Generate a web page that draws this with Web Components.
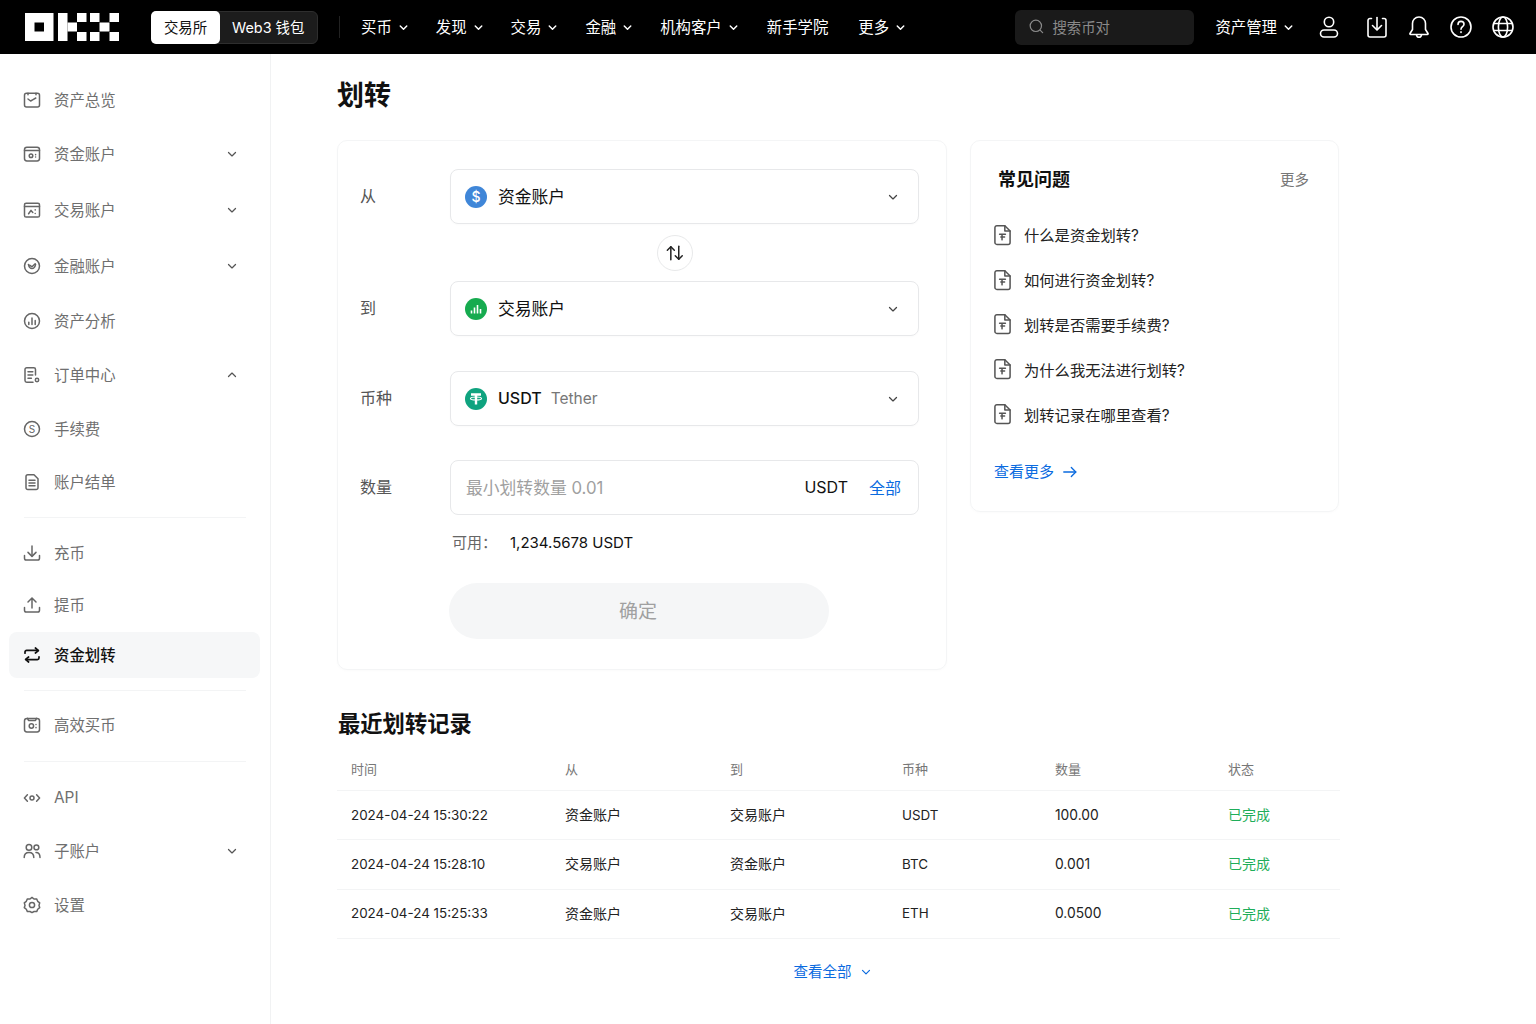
<!DOCTYPE html>
<html lang="zh-CN">
<head>
<meta charset="UTF-8">
<title>划转</title>
<style>
  html, body { margin: 0; height: 100%; background: #fff; }
  body { font-family: Inter, "Noto Sans CJK SC", sans-serif; color: #111; overflow: hidden; }
</style>
</head>
<body>
<app-shell></app-shell>

<script>
  const ICONS = {
    chevDown: '<polyline points="4.5,7 9,11.5 13.5,7"/>',
    chevUp: '<polyline points="4.5,11 9,6.5 13.5,11"/>',
    overview: '<rect x="1.5" y="2.2" width="15" height="13.8" rx="2"/><path d="M5 2.2v1.6M13 2.2v1.6"/><polyline points="5,8 7.6,10 9.6,8.800 12.800,7"/>',
    funding: '<rect x="1.5" y="2.2" width="15" height="13.8" rx="2.4"/><path d="M1.5 5.400h15"/><circle cx="8" cy="10.800" r="1.800"/><path d="M12.600 9.600v.1M12.600 12v.1"/>',
    trading: '<rect x="1.5" y="2.2" width="15" height="13.8" rx="1.6"/><path d="M1.5 5.600h15"/><polyline points="5.600,12.800 8,9.400 9.800,11.400"/><path d="M12.200 8.800v.1M12.200 12.400v.1"/>',
    earn: '<circle cx="9" cy="9" r="7.5"/><path d="M5.400 7.400c.6 2.800 2 4.200 3.600 4.200s3-1.400 3.600-4.200"/><polyline points="6.600,8.200 9,9.800 12.200,6.800"/>',
    analysis: '<circle cx="9" cy="9" r="7.5"/><path d="M5.800 10.200v2.200M9 6v6.400M12.200 8.600v3.800"/>',
    orders: '<path d="M12.500 9V3.500a1.700 1.700 0 0 0-1.700-1.700H3.700A1.700 1.700 0 0 0 2 3.500v11a1.700 1.700 0 0 0 1.700 1.700h6.300"/><path d="M5 5.800h4.800M5 9h4.800M5 12.200h3.400"/><circle cx="14" cy="14" r="1.700"/>',
    fee: '<circle cx="9" cy="9" r="7.5"/><text x="9" y="12.600" font-size="10" text-anchor="middle" fill="currentColor" stroke="none">S</text>',
    statement: '<path d="M3 3.600a1.800 1.800 0 0 1 1.800-1.800h6.200l4 4v9a1.800 1.800 0 0 1-1.800 1.800H4.800A1.800 1.800 0 0 1 3 14.800z"/><path d="M6 7.200h6M6 10h6M6 12.800h6"/>',
    deposit: '<path d="M1.500 11.500v2.700a1.800 1.800 0 0 0 1.800 1.800h11.400a1.800 1.800 0 0 0 1.800-1.800v-2.700"/><path d="M9 2v10"/><polyline points="5,8.400 9,12.400 13,8.400"/>',
    withdraw: '<path d="M1.500 11.500v2.700a1.800 1.800 0 0 0 1.800 1.800h11.400a1.800 1.800 0 0 0 1.800-1.800v-2.700"/><path d="M9 12V2.400"/><polyline points="5,6 9,2 13,6"/>',
    transfer: '<path d="M2 7.200V6a1.600 1.600 0 0 1 1.600-1.600H15"/><polyline points="12.400,2 15.400,4.600 12.400,7"/><path d="M16 10.800V12a1.600 1.600 0 0 1-1.600 1.600H3"/><polyline points="5.600,11 2.600,13.400 5.600,16"/>',
    fastbuy: '<rect x="1.500" y="2.400" width="15" height="13.600" rx="2.400"/><path d="M4.500 2.400l1 2h7l1-2"/><circle cx="8.400" cy="10" r="2.200"/><path d="M13 8.400v.1M13 11.600v.1"/>',
    api: '<polyline points="4.400,5.800 1.400,9 4.400,12.200"/><polyline points="13.600,5.800 16.600,9 13.600,12.200"/><circle cx="9" cy="9" r="2"/>',
    sub: '<circle cx="6" cy="5.400" r="2.800"/><circle cx="13.400" cy="5.400" r="2.400"/><path d="M1.200 15.600c0-3.400 2-5.200 4.800-5.200s4.800 1.800 4.800 5.200"/><path d="M13 10.400c2.400 0 4 1.800 4 5.200"/>',
    settings: '<path d="M9 1.400l2 1.600 2.600-.1 1.100 2.400 2 1.600-.7 2.500.7 2.200-2 1.700-1 2.300-2.600-.1L9 16.600l-2-1.100-2.600.1-1.100-2.300-2-1.700.7-2.200-.7-2.500 2-1.600L4.400 2.900 7 3z"/><circle cx="9" cy="9" r="2.600"/>',
    search: '<circle cx="8.300" cy="8.300" r="6"/><path d="M12.800 12.800l2.700 2.700"/>',
    user: '<circle cx="12" cy="7" r="4.700"/><rect x="3.500" y="15" width="17" height="7" rx="3.500"/>',
    download: '<path d="M6.500 3.500H5a2 2 0 0 0-2 2V20a2 2 0 0 0 2 2h14a2 2 0 0 0 2-2V5.500a2 2 0 0 0-2-2h-1.500"/><path d="M12 2.500v12"/><polyline points="7.500,10.500 12,15 16.500,10.500"/>',
    bell: '<path d="M12 2c-4 0-6.500 3-6.500 6.500v6L3 18.500c-.3.5 0 1 .6 1h16.800c.6 0 .9-.5.6-1l-2.500-4v-6C18.500 5 16 2 12 2z"/><path d="M9.500 19.800c.2 1.500 1.200 2.400 2.500 2.400s2.300-.9 2.500-2.400"/>',
    help: '<circle cx="12" cy="12" r="10"/><path d="M9 9.400c0-1.800 1.300-3 3-3s3 1.100 3 2.800c0 2.400-3 2.600-3 5"/><path d="M12 16.900v.6"/>',
    globe: '<circle cx="12" cy="12" r="10"/><ellipse cx="12" cy="12" rx="4.600" ry="10"/><path d="M3 8.500h18M3 15.500h18"/>',
    swap: '<path d="M7 20V4.500"/><polyline points="2.800,8.700 7,4.500 11.200,8.700"/><path d="M16.500 4v15.500"/><polyline points="12.300,15.300 16.500,19.500 20.700,15.300"/>',
    doc: '<path d="M2.500 3.200A1.700 1.700 0 0 1 4.200 1.500h6.800l4.500 4.500v9.800a1.700 1.700 0 0 1-1.700 1.700H4.200a1.700 1.700 0 0 1-1.700-1.700z"/><path d="M11 1.500V6h4.500"/><path d="M6.500 8.800h5M7.600 11.200h3.200M8.600 8.800v4.800"/>',
    arrow: '<path d="M2 9h13.500"/><polyline points="10.500,4 15.500,9 10.500,14"/>'
  };

  const VIEWBOX = { user: 24, download: 24, bell: 24, help: 24, globe: 24, swap: 24 };

  class UiIcon extends HTMLElement {
    connectedCallback() {
      const name = this.getAttribute('name');
      const size = this.getAttribute('size') || 18;
      const weight = this.getAttribute('weight') || 1.3;
      const vb = VIEWBOX[name] || 18;
      this.attachShadow({ mode: 'open' }).innerHTML = `
        <style>:host { display: inline-flex; flex: none; } svg { display: block; overflow: visible; }</style>
        <svg width="${size}" height="${size}" viewBox="0 0 ${vb} ${vb}" fill="none" stroke="currentColor"
             stroke-width="${weight}" stroke-linecap="round" stroke-linejoin="round">${ICONS[name]}</svg>`;
    }
  }
  customElements.define('ui-icon', UiIcon);

  class OkxLogo extends HTMLElement {
    connectedCallback() {
      this.attachShadow({ mode: 'open' }).innerHTML = `
        <style>:host { display: block; flex: none; line-height: 0; }</style>
        <svg width="94" height="28" viewBox="0 0 94 28" fill="#fff">
          <path fill-rule="evenodd" d="M0 0h28.500v28H0zM9.500 9.500v9h9.500v-9z"/>
          <rect x="33" y="0" width="9.500" height="28"/>
          <rect x="42.500" y="9.500" width="9.500" height="9"/>
          <rect x="52" y="0" width="9.500" height="9"/>
          <rect x="52" y="19" width="9.500" height="9"/>
          <rect x="65" y="0" width="9.500" height="9"/>
          <rect x="84.500" y="0" width="9.500" height="9"/>
          <rect x="74.500" y="9.500" width="10" height="9"/>
          <rect x="65" y="19" width="9.500" height="9"/>
          <rect x="84.500" y="19" width="9.500" height="9"/>
        </svg>`;
    }
  }
  customElements.define('okx-logo', OkxLogo);

  class NavLink extends HTMLElement {
    connectedCallback() {
      const chev = this.hasAttribute('menu') ? '<ui-icon name="chevDown" size="13" weight="2"></ui-icon>' : '';
      this.attachShadow({ mode: 'open' }).innerHTML = `
        <style>
          :host { display: inline-flex; align-items: center; gap: 5px; font-size: 15.4px; color: #fff; white-space: nowrap; flex: none; }
          span { padding-bottom: 2px; }
        </style>
        <span><slot></slot></span>${chev}`;
    }
  }
  customElements.define('nav-link', NavLink);

  class TopBar extends HTMLElement {
    connectedCallback() {
      this.attachShadow({ mode: 'open' }).innerHTML = `
        <style>
          :host { display: flex; align-items: center; height: 54px; background: #000; color: #fff; padding: 0 21px 0 25px; box-sizing: border-box; }
          .seg { display: flex; width: 167px; height: 33px; margin-left: 32px; background: #1c1c1c; border: 1px solid #2e2e2e; border-radius: 6px; box-sizing: border-box; font-size: 14.4px; flex: none; }
          .seg span { display: flex; align-items: center; justify-content: center; padding-bottom: 1px; box-sizing: border-box; }
          .seg .on { width: 69px; background: #fff; color: #111; border-radius: 5px; margin: -1px 0 -1px -1px; }
          .seg .off { padding-left: 12px; }
          .rule { width: 1px; height: 22px; background: #222; margin: 0 21px; flex: none; }
          .nav { display: flex; gap: 26px; }
          .nav .wide { margin-left: 1px; }
          .nav .last { margin-left: 4px; }
          .right { margin-left: auto; display: flex; align-items: center; }
          .search { width: 179px; height: 35px; background: #1a1a1a; border-radius: 6px; display: flex; align-items: center; gap: 7px; padding: 0 0 1px 13px; box-sizing: border-box; font-size: 14.4px; color: #8a8a8a; }
          .assets { margin: 0 22px 0 21px; }
          .icons { display: flex; gap: 18px; }
          .icons ui-icon:first-child { margin-right: 6px; }
        </style>
        <okx-logo></okx-logo>
        <div class="seg"><span class="on">交易所</span><span class="off">Web3 钱包</span></div>
        <div class="rule"></div>
        <div class="nav">
          <nav-link menu>买币</nav-link>
          <nav-link menu>发现</nav-link>
          <nav-link menu>交易</nav-link>
          <nav-link menu>金融</nav-link>
          <nav-link menu>机构客户</nav-link>
          <nav-link class="wide">新手学院</nav-link>
          <nav-link class="last" menu>更多</nav-link>
        </div>
        <div class="right">
          <div class="search"><ui-icon name="search" size="17"></ui-icon>搜索币对</div>
          <nav-link class="assets" menu>资产管理</nav-link>
          <div class="icons">
            <ui-icon name="user" size="24" weight="1.600"></ui-icon>
            <ui-icon name="download" size="24" weight="1.600"></ui-icon>
            <ui-icon name="bell" size="24" weight="1.600"></ui-icon>
            <ui-icon name="help" size="24" weight="1.600"></ui-icon>
            <ui-icon name="globe" size="24" weight="1.600"></ui-icon>
          </div>
        </div>`;
    }
  }
  customElements.define('top-bar', TopBar);

  class SideItem extends HTMLElement {
    connectedCallback() {
      const icon = this.getAttribute('icon');
      const arrow = this.getAttribute('arrow');
      const active = this.hasAttribute('active');
      this.attachShadow({ mode: 'open' }).innerHTML = `
        <style>
          :host { display: flex; align-items: center; height: ${this.getAttribute('h') || 54}px; margin: 0 10px 0 9px; padding: 0 21px 0 14px;
                  box-sizing: border-box; font-size: 15.4px; color: ${active ? '#111' : '#6f6f6f'}; border-radius: 8px;
                  ${active ? 'background: #f6f7f8; font-weight: 500;' : ''} }
          .label { margin-left: 13px; flex: 1; padding-bottom: 2px; }
          .icon { color: ${active ? '#111' : '#666'}; display: flex; }
          .chev { color: #555; display: flex; }
        </style>
        <span class="icon"><ui-icon name="${icon}" size="18" weight="${active ? 1.700 : 1.500}"></ui-icon></span>
        <span class="label"><slot></slot></span>
        ${arrow ? `<span class="chev"><ui-icon name="${arrow}" size="14" weight="1.600"></ui-icon></span>` : ''}`;
    }
  }
  customElements.define('side-item', SideItem);

  class SideNav extends HTMLElement {
    connectedCallback() {
      this.attachShadow({ mode: 'open' }).innerHTML = `
        <style>
          :host { display: block; width: 271px; flex: none; border-right: 1px solid #f1f2f3; box-sizing: border-box; padding-top: 19px; }
          hr { border: 0; height: 1px; background: #f3f4f5; margin: 10px 24px; }
          hr.b { margin: 12px 24px 10px; }
        </style>
        <side-item icon="overview" h="54">资产总览</side-item>
        <side-item icon="funding" h="54" arrow="chevDown">资金账户</side-item>
        <side-item icon="trading" h="58" arrow="chevDown">交易账户</side-item>
        <side-item icon="earn" h="54" arrow="chevDown">金融账户</side-item>
        <side-item icon="analysis" h="56">资产分析</side-item>
        <side-item icon="orders" h="52" arrow="chevUp">订单中心</side-item>
        <side-item icon="fee" h="56">手续费</side-item>
        <side-item icon="statement" h="50">账户结单</side-item>
        <hr>
        <side-item icon="deposit" h="50">充币</side-item>
        <side-item icon="withdraw" h="54">提币</side-item>
        <side-item icon="transfer" h="46" active>资金划转</side-item>
        <hr class="b">
        <side-item icon="fastbuy" h="48">高效买币</side-item>
        <hr class="b">
        <side-item icon="api" h="52">API</side-item>
        <side-item icon="sub" h="54" arrow="chevDown">子账户</side-item>
        <side-item icon="settings" h="54">设置</side-item>`;
    }
  }
  customElements.define('side-nav', SideNav);

  class CoinBadge extends HTMLElement {
    connectedCallback() {
      const kind = this.getAttribute('kind');
      const bg = { funding: '#3f86d8', trading: '#16ab4f', usdt: '#0fa37f' }[kind];
      const inner = {
        funding: '<text x="11" y="15.800" font-size="14" font-weight="500" text-anchor="middle" fill="#fff">$</text>',
        trading: '<path d="M6.500 12.500v3M9.500 9.500v6M12.500 7v8.500M15.500 11v4.500" stroke="#fff" stroke-width="1.600" fill="none"/>',
        usdt: '<path d="M6 6.500h10M11 6.500v10" stroke="#fff" stroke-width="2.400" fill="none"/><ellipse cx="11" cy="10.500" rx="5.500" ry="1.500" stroke="#fff" stroke-width="1.200" fill="none"/>'
      }[kind];
      this.attachShadow({ mode: 'open' }).innerHTML = `
        <style>:host { display: block; flex: none; line-height: 0; }</style>
        <svg width="22" height="22" viewBox="0 0 22 22"><circle cx="11" cy="11" r="11" fill="${bg}"/>${inner}</svg>`;
    }
  }
  customElements.define('coin-badge', CoinBadge);

  class FieldRow extends HTMLElement {
    connectedCallback() {
      const kind = this.getAttribute('kind');
      this.attachShadow({ mode: 'open' }).innerHTML = `
        <style>
          :host { display: flex; align-items: center; font-size: 16.800px; }
          .label { width: 90px; font-size: 16px; color: #555; flex: none; padding-bottom: 3px; }
          .box { width: 469px; height: 55px; box-sizing: border-box; border: 1px solid #e7e8ea; border-radius: 8px; display: flex; align-items: center; gap: 11px; padding: 0 18px 0 14px; color: #111; box-shadow: 0 1px 2px rgba(0,0,0,.02); }
          .value { flex: 1; display: flex; align-items: baseline; gap: 9px; padding-bottom: 2px; }
          .chev { color: #444; display: flex; }
        </style>
        <span class="label">${this.getAttribute('label')}</span>
        <div class="box">
          <coin-badge kind="${kind}"></coin-badge>
          <span class="value"><slot></slot></span>
          <span class="chev"><ui-icon name="chevDown" size="14" weight="1.600"></ui-icon></span>
        </div>`;
    }
  }
  customElements.define('field-row', FieldRow);

  class TransferForm extends HTMLElement {
    connectedCallback() {
      this.attachShadow({ mode: 'open' }).innerHTML = `
        <style>
          :host { display: block; width: 610px; height: 530px; box-sizing: border-box; border: 1px solid #f4f5f6; border-radius: 10px; padding: 28px 0 0 22px; flex: none; box-shadow: 0 1px 3px rgba(0,0,0,.02); }
          .swap { width: 36px; height: 36px; margin: 11px 0 10px 297px; border: 1px solid #e8e9ea; border-radius: 50%; display: flex; align-items: center; justify-content: center; box-sizing: border-box; color: #222; }
          .gap35 { margin-top: 35px; }
          .amount { display: flex; align-items: center; margin-top: 34px; font-size: 16.800px; }
          .amount .label { width: 90px; font-size: 16px; color: #555; flex: none; padding-bottom: 3px; }
          .input { width: 469px; height: 55px; box-sizing: border-box; border: 1px solid #e7e8ea; border-radius: 8px; display: flex; align-items: center; padding: 0 17px 0 15px; }
          .input span { padding-bottom: 2px; }
          .ph { flex: 1; color: #a0a0a0; }
          .unit { color: #111; margin-right: 21px; font-size: 16px; }
          .all { color: #0b6bdf; font-size: 16px; }
          .avail { margin: 18px 0 0 92px; font-size: 15px; line-height: 20px; display: flex; }
          .avail span { color: #666; width: 58px; }
          .tick { font-size: 16px; font-weight: 500; }
          .tether { font-size: 15.500px; color: #777; }
          button { display: block; width: 380px; height: 56px; margin: 30px 0 0 89px; padding: 0 2px 4px 0; border: 0; border-radius: 28px; background: #f5f6f7; color: #a0a0a0; font: inherit; font-size: 19px; }
        </style>
        <field-row label="从" kind="funding">资金账户</field-row>
        <div class="swap"><ui-icon name="swap" size="20" weight="1.800"></ui-icon></div>
        <field-row label="到" kind="trading">交易账户</field-row>
        <field-row class="gap35" label="币种" kind="usdt"><span class="tick">USDT</span><span class="tether">Tether</span></field-row>
        <div class="amount">
          <span class="label">数量</span>
          <div class="input"><span class="ph">最小划转数量 0.01</span><span class="unit">USDT</span><span class="all">全部</span></div>
        </div>
        <div class="avail"><span>可用：</span>1,234.5678 USDT</div>
        <button>确定</button>`;
    }
  }
  customElements.define('transfer-form', TransferForm);

  class FaqItem extends HTMLElement {
    connectedCallback() {
      this.attachShadow({ mode: 'open' }).innerHTML = `
        <style>
          :host { display: flex; align-items: center; gap: 11px; height: 44.800px; font-size: 15.300px; color: #222; }
          ui-icon { color: #555; margin-left: -2px; }
        </style>
        <ui-icon name="doc" size="21" weight="1.300"></ui-icon><slot></slot>`;
    }
  }
  customElements.define('faq-item', FaqItem);

  class FaqCard extends HTMLElement {
    connectedCallback() {
      this.attachShadow({ mode: 'open' }).innerHTML = `
        <style>
          :host { display: block; width: 369px; height: 372px; box-sizing: border-box; border: 1px solid #f4f5f6; border-radius: 10px; padding: 23px 29px 0 23px; flex: none; box-shadow: 0 1px 3px rgba(0,0,0,.02); }
          .head { display: flex; justify-content: space-between; align-items: center; height: 28px; padding-left: 4px; }
          h3 { margin: 0; font-size: 18px; font-weight: 600; }
          .more { font-size: 14.500px; color: #777; }
          .list { margin-top: 20px; }
          .all { display: flex; align-items: center; gap: 8px; margin-top: 25px; color: #0b6bdf; font-size: 15px; line-height: 22px; }
        </style>
        <div class="head"><h3>常见问题</h3><span class="more">更多</span></div>
        <div class="list">
          <faq-item>什么是资金划转?</faq-item>
          <faq-item>如何进行资金划转?</faq-item>
          <faq-item>划转是否需要手续费?</faq-item>
          <faq-item>为什么我无法进行划转?</faq-item>
          <faq-item>划转记录在哪里查看?</faq-item>
        </div>
        <div class="all">查看更多<ui-icon name="arrow" size="16" weight="1.500"></ui-icon></div>`;
    }
  }
  customElements.define('faq-card', FaqCard);

  class RecordRow extends HTMLElement {
    connectedCallback() {
      const head = this.hasAttribute('head');
      const cells = this.getAttribute('cells').split('|');
      const cls = ['num', '', '', 'num', 'amt', 'ok'];
      this.attachShadow({ mode: 'open' }).innerHTML = `
        <style>
          :host { display: grid; grid-template-columns: 214px 165px 172px 153px 173px 1fr; align-items: center; padding-left: 14px;
                  height: ${head ? 40 : 49.330}px; box-sizing: border-box; border-bottom: 1px solid #f3f4f5;
                  font-size: ${head ? 13 : 14}px; color: ${head ? '#777' : '#222'}; }
          span { padding-bottom: ${head ? 4 : 2}px; }
          .num { font-size: 13.400px; padding-bottom: 1px; }
          .amt { font-size: 13.800px; padding-bottom: 1px; }
          .ok { color: #1fae5a; }
        </style>
        ${cells.map((c, i) => `<span class="${head ? '' : cls[i]}">${c}</span>`).join('')}`;
    }
  }
  customElements.define('record-row', RecordRow);

  class TransferRecords extends HTMLElement {
    connectedCallback() {
      this.attachShadow({ mode: 'open' }).innerHTML = `
        <style>
          :host { display: block; width: 1003px; margin-top: 39px; }
          h2 { margin: 0 0 12px 1px; font-size: 22.300px; font-weight: 600; line-height: 30px; }
          .all { display: flex; justify-content: center; align-items: center; gap: 7px; margin-top: 22px; padding-right: 11px; color: #0b6bdf; font-size: 14.500px; line-height: 22px; }
        </style>
        <h2>最近划转记录</h2>
        <record-row head cells="时间|从|到|币种|数量|状态"></record-row>
        <record-row cells="2024-04-24 15:30:22|资金账户|交易账户|USDT|100.00|已完成"></record-row>
        <record-row cells="2024-04-24 15:28:10|交易账户|资金账户|BTC|0.001|已完成"></record-row>
        <record-row cells="2024-04-24 15:25:33|资金账户|交易账户|ETH|0.0500|已完成"></record-row>
        <div class="all">查看全部<ui-icon name="chevDown" size="14" weight="1.500"></ui-icon></div>`;
    }
  }
  customElements.define('transfer-records', TransferRecords);

  class AppShell extends HTMLElement {
    connectedCallback() {
      this.attachShadow({ mode: 'open' }).innerHTML = `
        <style>
          :host { display: flex; flex-direction: column; height: 1024px; }
          .body { display: flex; flex: 1; }
          main { flex: 1; padding: 22px 0 0 66px; }
          h1 { margin: 0 0 24px; font-size: 27px; font-weight: 600; line-height: 40px; }
          .cols { display: flex; gap: 23px; align-items: flex-start; }
        </style>
        <top-bar></top-bar>
        <div class="body">
          <side-nav></side-nav>
          <main>
            <h1>划转</h1>
            <div class="cols"><transfer-form></transfer-form><faq-card></faq-card></div>
            <transfer-records></transfer-records>
          </main>
        </div>`;
    }
  }
  customElements.define('app-shell', AppShell);
</script>
</body>
</html>
